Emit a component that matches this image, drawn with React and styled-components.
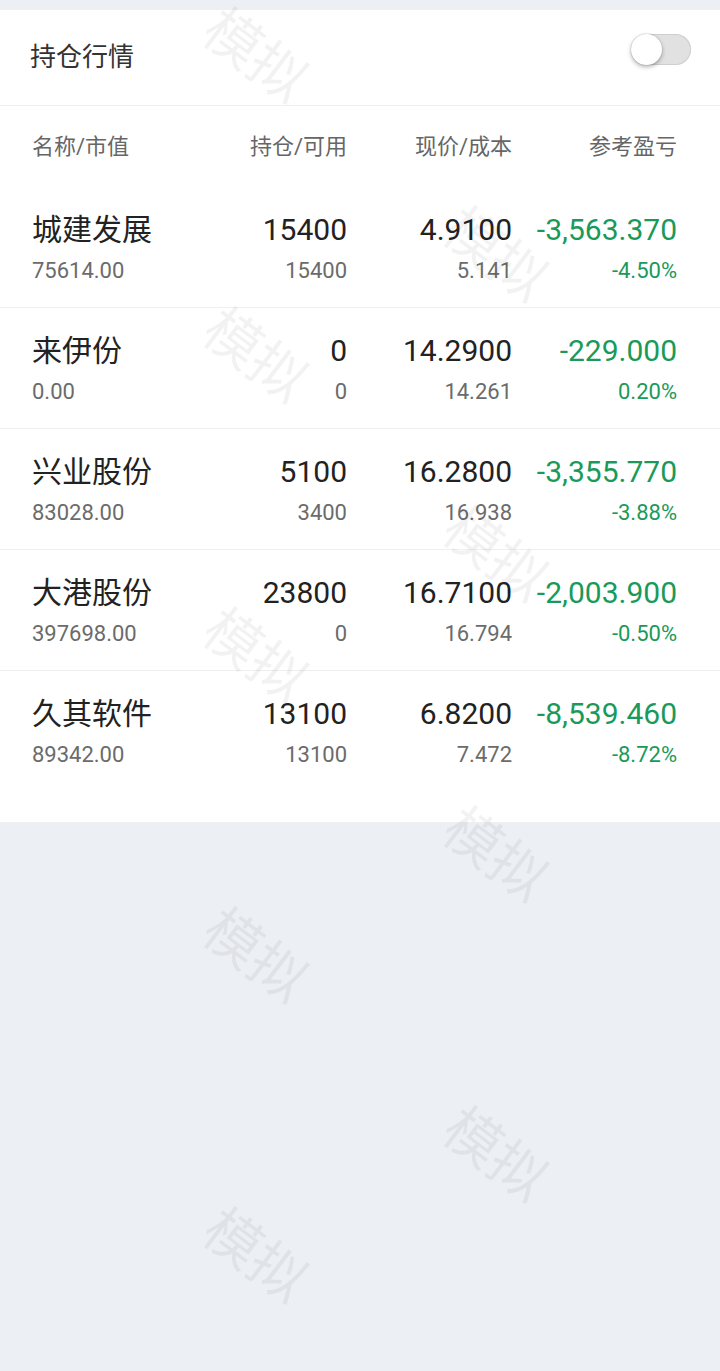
import React from 'react'
import styled, { createGlobalStyle } from 'styled-components'

const GlobalStyle = createGlobalStyle`
  html, body {
    margin: 0;
    padding: 0;
    background: #eceff4;
  }
  body {
    font-family: Roboto, "Noto Sans CJK SC", "Noto Sans", sans-serif;
  }
`

const Page = styled.div`
  position: relative;
  min-height: 100vh;
  padding-top: 10px;
  box-sizing: border-box;
  overflow: hidden;
`

const Card = styled.section`
  background: #fff;
  padding-bottom: 30px;
`

const TitleBar = styled.div`
  display: flex;
  justify-content: space-between;
  align-items: center;
  height: 96px;
  padding: 0 29px 6px 30px;
  box-sizing: border-box;
  border-bottom: 1px solid #efefef;
`

const Title = styled.h1`
  margin: 0;
  font-size: 26px;
  font-weight: 400;
  color: #333;
`

const Toggle = styled.div`
  position: relative;
  width: 60px;
  height: 31px;
  margin-top: -10px;
  border-radius: 16px;
  background: #e1e1e1;
  box-shadow: inset 0 0 0 1px #cfcfcf;
`

const Knob = styled.div`
  position: absolute;
  left: 0;
  top: 0;
  width: 31px;
  height: 31px;
  border-radius: 50%;
  background: #fff;
  box-shadow: 0 2px 4px rgba(0, 0, 0, 0.3), 0 0 0 1px rgba(0, 0, 0, 0.06);
`

const Grid = styled.div`
  display: grid;
  grid-template-columns: 150px 165px 165px 165px;
  padding: 0 43px 0 32px;
`

const HeadRow = styled(Grid)`
  height: 81px;
  align-items: center;
  padding-bottom: 5px;
  box-sizing: border-box;
`

const HeadCell = styled.div`
  font-size: 22px;
  color: #666;
  text-align: ${p => (p.$left ? 'left' : 'right')};
`

const Row = styled(Grid)`
  height: 121px;
  box-sizing: border-box;
  padding-top: 25px;
  border-bottom: ${p => (p.$last ? 'none' : '1px solid #efefef')};
`

const Cell = styled.div`
  display: flex;
  flex-direction: column;
  align-items: ${p => (p.$left ? 'flex-start' : 'flex-end')};
  white-space: nowrap;
`

const Main = styled.div`
  font-size: 30px;
  line-height: 36px;
  color: ${p => (p.$green ? '#1a9a5a' : '#222')};
`

const Sub = styled.div`
  margin-top: 9px;
  font-size: 22px;
  line-height: 28px;
  color: ${p => (p.$green ? '#1a9a5a' : '#6b6b6b')};
`

const WatermarkLayer = styled.div`
  position: absolute;
  inset: 0;
  pointer-events: none;
`

const Mark = styled.span`
  position: absolute;
  width: 120px;
  height: 60px;
  margin: -30px 0 0 -60px;
  font-size: 56px;
  line-height: 60px;
  text-align: center;
  color: rgba(0, 0, 0, 0.05);
  font-family: "Noto Sans CJK SC", sans-serif;
  transform: rotate(37deg);
`

const stocks = [
  { name: '城建发展', value: '75614.00', hold: '15400', avail: '15400', price: '4.9100', cost: '5.141', pl: '-3,563.370', pct: '-4.50%' },
  { name: '来伊份', value: '0.00', hold: '0', avail: '0', price: '14.2900', cost: '14.261', pl: '-229.000', pct: '0.20%' },
  { name: '兴业股份', value: '83028.00', hold: '5100', avail: '3400', price: '16.2800', cost: '16.938', pl: '-3,355.770', pct: '-3.88%' },
  { name: '大港股份', value: '397698.00', hold: '23800', avail: '0', price: '16.7100', cost: '16.794', pl: '-2,003.900', pct: '-0.50%' },
  { name: '久其软件', value: '89342.00', hold: '13100', avail: '13100', price: '6.8200', cost: '7.472', pl: '-8,539.460', pct: '-8.72%' }
]

// watermark centres, two staggered columns
const marks = []
for (let i = 0; i < 5; i++) marks.push({ x: 258, y: 52 + i * 300 })
for (let i = 0; i < 4; i++) marks.push({ x: 498, y: 251 + i * 300 })

export default function App() {
  return (
    <Page>
      <GlobalStyle />
      <Card>
        <TitleBar>
          <Title>持仓行情</Title>
          <Toggle>
            <Knob />
          </Toggle>
        </TitleBar>
        <HeadRow>
          <HeadCell $left>名称/市值</HeadCell>
          <HeadCell>持仓/可用</HeadCell>
          <HeadCell>现价/成本</HeadCell>
          <HeadCell>参考盈亏</HeadCell>
        </HeadRow>
        {stocks.map((s, i) => (
          <Row key={s.name} $last={i === stocks.length - 1}>
            <Cell $left>
              <Main>{s.name}</Main>
              <Sub>{s.value}</Sub>
            </Cell>
            <Cell>
              <Main>{s.hold}</Main>
              <Sub>{s.avail}</Sub>
            </Cell>
            <Cell>
              <Main>{s.price}</Main>
              <Sub>{s.cost}</Sub>
            </Cell>
            <Cell>
              <Main $green>{s.pl}</Main>
              <Sub $green>{s.pct}</Sub>
            </Cell>
          </Row>
        ))}
      </Card>
      <WatermarkLayer>
        {marks.map((m, i) => (
          <Mark key={i} style={{ left: m.x, top: m.y }}>模拟</Mark>
        ))}
      </WatermarkLayer>
    </Page>
  )
}
